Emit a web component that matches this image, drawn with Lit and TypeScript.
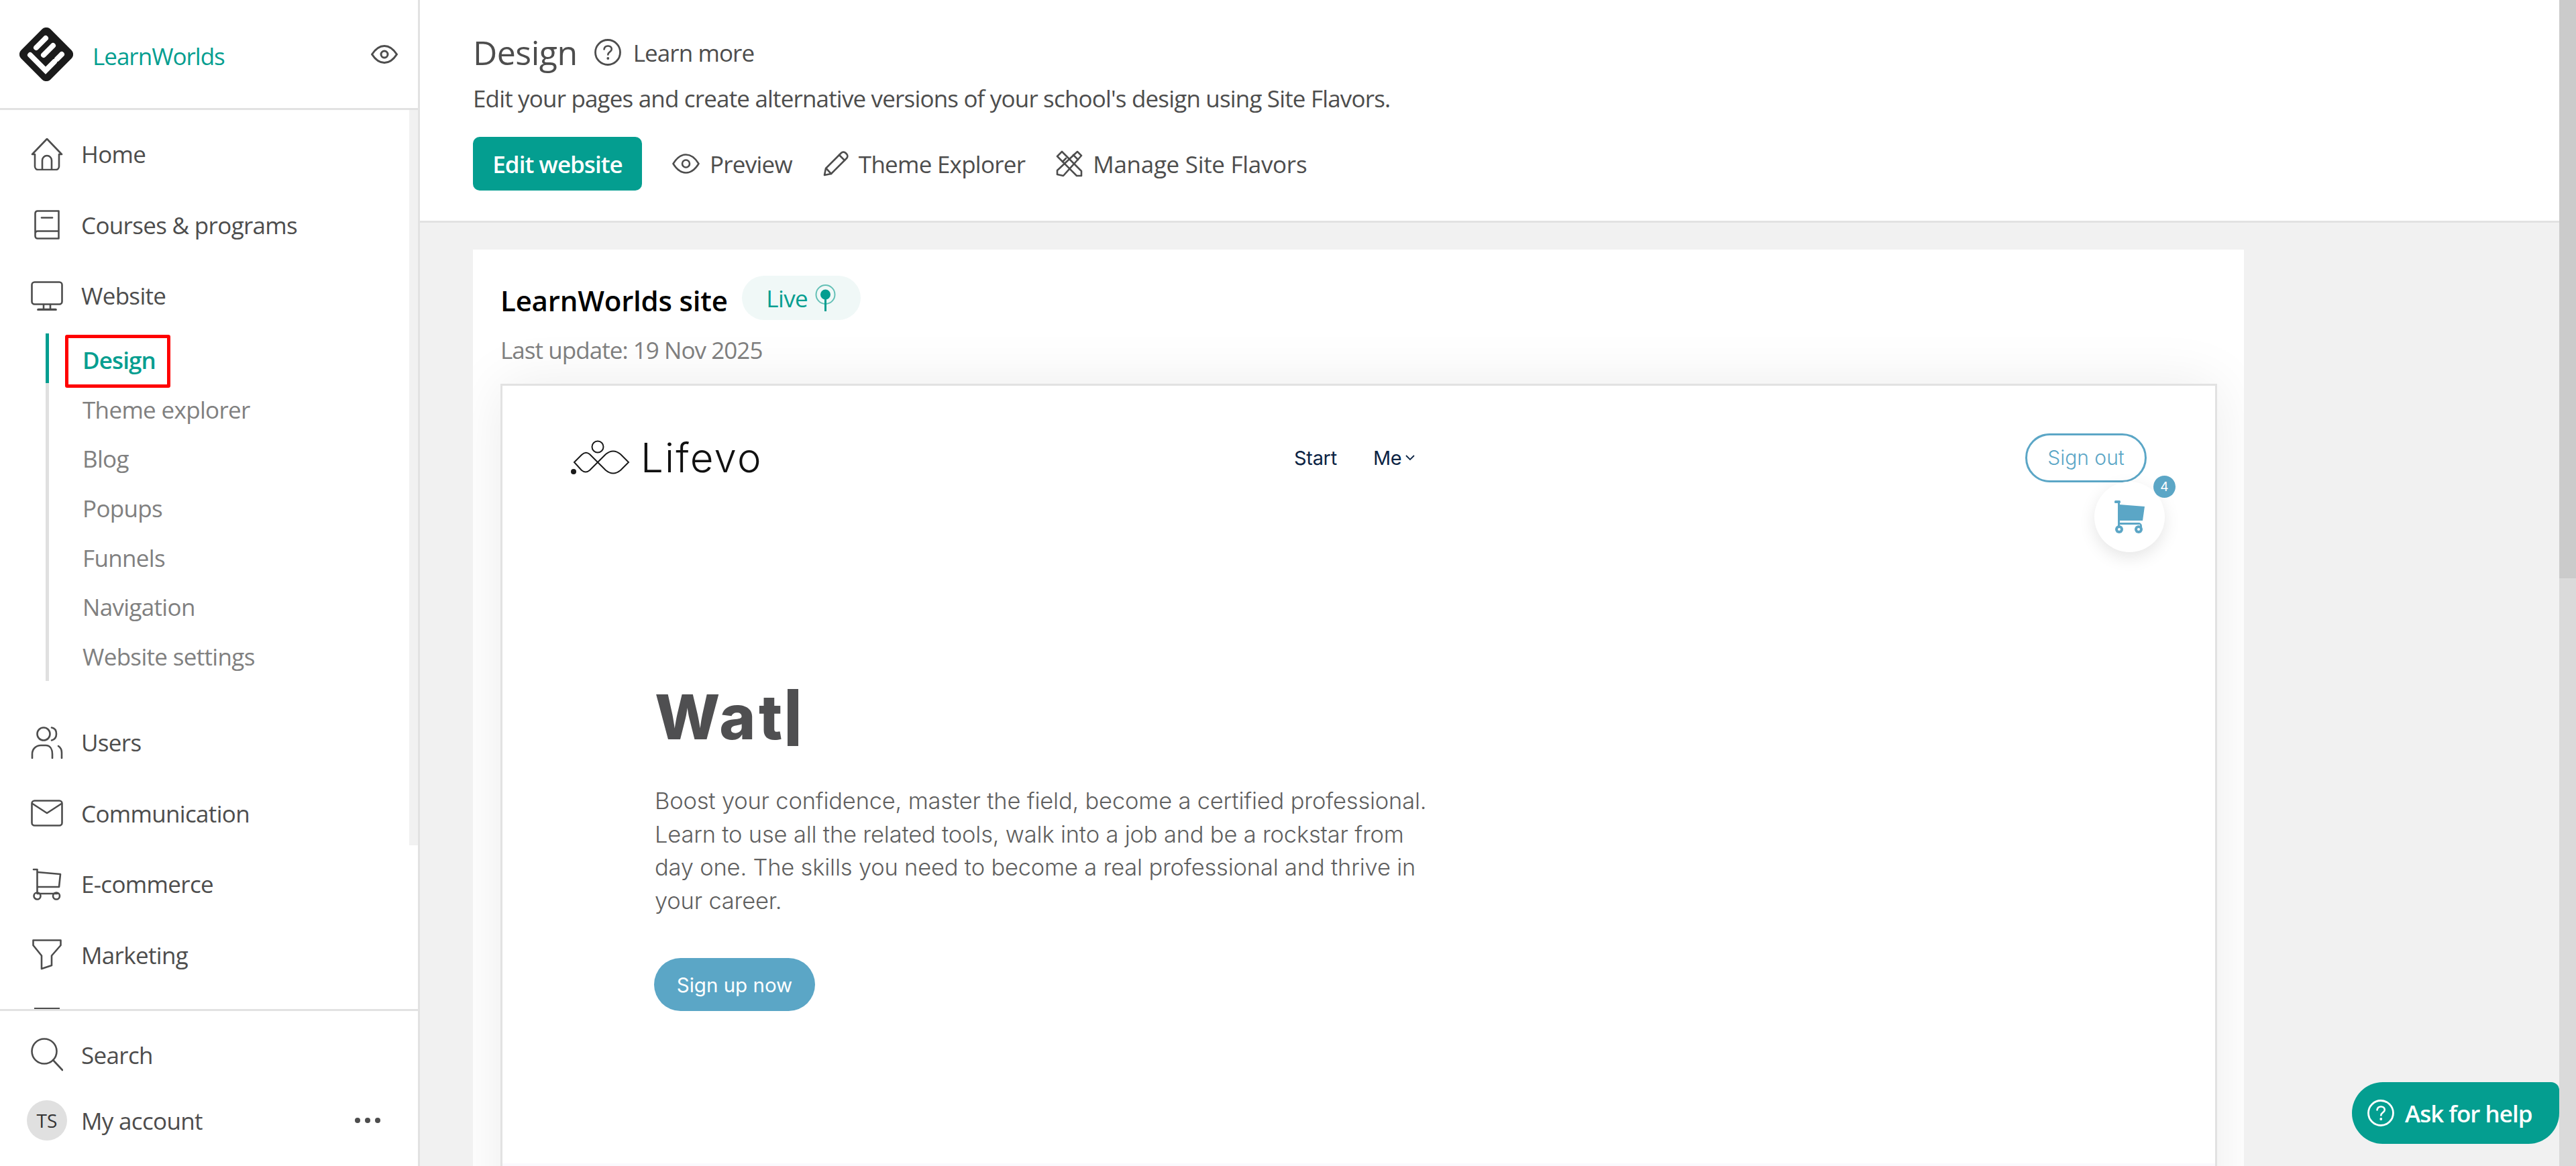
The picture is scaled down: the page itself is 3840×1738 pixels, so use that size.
import { LitElement, html, css, svg } from 'lit';
import { customElement } from 'lit/decorators.js';

const stroke = (w: number, h: number, body: unknown, sw = 2.6, color = '#4d4d4d') => html`<svg
  width=${w}
  height=${h}
  viewBox="0 0 ${w} ${h}"
  fill="none"
  stroke=${color}
  stroke-width=${sw}
  stroke-linecap="round"
  stroke-linejoin="round"
>${body}</svg>`;

const icons: Record<string, () => unknown> = {
  home: () => stroke(48, 48, svg`<path d="M2 24 24 1l22 23h-4v18a5 5 0 0 1-5 5H11a5 5 0 0 1-5-5V24H2Z"/><path d="M17 47V33a7 7 0 0 1 14 0v14"/>`),
  book: () => stroke(38, 44, svg`<path d="M1.5 35V5A3.5 3.5 0 0 1 5 1.5h31.500v41H5A3.500 3.500 0 0 1 1.500 39V35A3.500 3.500 0 0 1 5 31.500h31.500"/><path d="M11 11.500h16"/>`),
  monitor: () => stroke(48, 44, svg`<rect x="1.500" y="1.500" width="45" height="33" rx="4"/><path d="M19 35v7M29 35v7"/><path d="M11 42.500h26" stroke-width="3.600"/>`),
  users: () => stroke(48, 48, svg`<circle cx="19" cy="11" r="9.500"/><path d="M31 1.500c4.500.8 7 4.500 7 9.500s-3 8.500-7 9.500"/><path d="M2 47v-6c0-8 6-13 13-13h7c7 0 10 6 10 13v6"/><path d="M41 29c3 2 5 6 5 10v8"/>`),
  mail: () => stroke(48, 40, svg`<rect x="1.500" y="1.500" width="45" height="37" rx="4"/><path d="m2.500 6 21.500 14L45.500 6"/>`),
  cart: () => stroke(44, 48, svg`<path d="M2 2h5.500v36h30"/><path d="M8 6l34 3-2 19H8"/><circle cx="7.500" cy="41.500" r="5"/><circle cx="36" cy="41.500" r="5"/>`),
  funnel: () => stroke(44, 46, svg`<path d="M1.500 1.500h41v7.500L29 24.500V39l-15 5V24.500L1.500 9Z"/>`),
  search: () => stroke(48, 50, svg`<circle cx="20" cy="20" r="18.500"/><path d="m33 33 14 15"/>`),
  eye: () => stroke(40, 28, svg`<path d="M1.500 14C7 5.500 13 1.500 20 1.500S33 5.500 38.500 14C33 22.500 27 26.500 20 26.500S7 22.500 1.500 14Z" stroke-width="3"/><circle cx="20" cy="14" r="5" stroke-width="3"/>`),
  preview: () => stroke(41, 30, svg`<path d="M1.500 15C7 6 13 1.500 20.500 1.500S34 6 39.500 15C34 24 28 28.500 20.500 28.500S7 24 1.500 15Z"/><circle cx="20.500" cy="15" r="5.500"/>`),
  pencil: () => stroke(38, 38, svg`<path d="M2 36l2-10L27 3a4.500 4.500 0 0 1 6.500 0l1.500 1.500a4.500 4.500 0 0 1 0 6.500L12 34Z"/><path d="m4.500 26 7.500 8M24 6l8 8"/>`),
  tools: () => stroke(40, 40, svg`<path d="M2 9 9 2l29 29v7h-7Z"/><path d="m10 17 5-5M32 2l6 6-27 30-9-2v-6Z"/><path d="m26 7 7 7"/>`),
};

const help = (color: string, size: number) => html`<svg width=${size} height=${size} viewBox="0 0 40 40" fill="none">
  <circle cx="20" cy="20" r="18.500" stroke=${color} stroke-width="2.800" />
  <path d="M14.500 15.500c.5-3.500 3-5 5.800-5 3.200 0 5.500 2 5.500 4.800 0 4-5.500 4-5.500 8.200" stroke=${color} stroke-width="2.600" stroke-linecap="round" />
  <circle cx="20.300" cy="29" r="1.900" fill=${color} />
</svg>`;

const brandLogo = html`<svg width="80" height="80" viewBox="0 0 80 80">
  <rect x="9" y="9" width="62" height="62" rx="9" transform="rotate(45 40 40)" fill="#1b1b1b" />
  <g stroke="#fff" stroke-width="8" stroke-linecap="round" stroke-linejoin="miter" fill="none">
    <path d="M16 41 39 64l13-13" />
    <path d="M25 30 39 16" />
    <path d="M36 41 50 27" />
    <path d="M56 47 63 40" />
  </g>
</svg>`;

const lifevoLogo = html`<svg width="90" height="52" viewBox="0 0 90 52" fill="none" stroke="#1a1a1a" stroke-width="2">
  <circle cx="41" cy="10" r="8.500" />
  <path d="M6 33 17 22Q23 16 29 21L53 45Q64 54 75 45L87 33 75 21Q64 12 53 21L29 45Q23 50 17 45Z" />
  <circle cx="5" cy="47" r="4" fill="#1a1a1a" stroke="none" />
</svg>`;

@customElement('side-nav')
export class SideNav extends LitElement {
  static styles = css`
    :host {
      display: flex;
      flex-direction: column;
      width: 626px;
      height: 1738px;
      flex: none;
      box-sizing: border-box;
      background: #fff;
      border-right: 3px solid #e2e2e2;
      font-family: 'Open Sans', 'Noto Sans', sans-serif;
      color: #4d4d4d;
    }
    .brand {
      height: 164px;
      flex: none;
      box-sizing: border-box;
      border-bottom: 3px solid #e2e2e2;
      display: flex;
      align-items: center;
      padding: 0 30px 0 29px;
    }
    .brand-name {
      margin-left: 29px;
      font-size: 35px;
      letter-spacing: -1px;
      color: #049e90;
      flex: 1;
      padding-top: 6px;
    }
    .scroll {
      flex: 1;
      min-height: 0;
      overflow: hidden;
      display: flex;
    }
    .list {
      flex: 1;
      min-width: 0;
      padding-top: 13px;
    }
    .thumb {
      width: 13px;
      height: 1096px;
      background: #f1f1f1;
      flex: none;
    }
    .row {
      height: 105.5px;
      display: flex;
      align-items: center;
      font-size: 35px;
      letter-spacing: -0.67px;
    }
    .row .ic {
      width: 48px;
      margin: 0 27px 0 46px;
      display: flex;
      justify-content: center;
      flex: none;
    }
    .row .ic svg {
      display: block;
    }
    .sub {
      margin: 3.5px 0 39px 68px;
      border-left: 5px solid #e0e0e0;
      position: relative;
      height: 518px;
      box-sizing: border-box;
      padding-left: 50px;
      padding-top: 3px;
    }
    .sub a {
      display: block;
      height: 73.7px;
      line-height: 73.7px;
      font-size: 35px;
      letter-spacing: -0.67px;
      color: #808080;
      white-space: nowrap;
    }
    .sub a.on {
      color: #049e90;
      font-weight: 600;
      letter-spacing: -0.9px;
    }
    .sub .mark {
      position: absolute;
      left: -5px;
      top: 0;
      width: 5px;
      height: 74px;
      background: #049e90;
    }
    .sub .outline {
      position: absolute;
      left: 24px;
      top: 2px;
      width: 157px;
      height: 79px;
      box-sizing: border-box;
      border: 5px solid #f00;
      border-radius: 3px;
    }
    .clipped {
      width: 38px;
      height: 2px;
      margin: 26px 0 0 51px;
      background: #4d4d4d;
    }
    .foot {
      flex: none;
      height: 234px;
      box-sizing: border-box;
      border-top: 3px solid #e2e2e2;
      padding-top: 15px;
    }
    .foot .row {
      height: 100px;
    }
    .foot .row.account {
      height: 96px;
    }
    .avatar {
      width: 60px;
      height: 60px;
      border-radius: 50%;
      background: #e0e0e0;
      margin: 0 21px 0 40px;
      display: flex;
      align-items: center;
      justify-content: center;
      font-size: 28px;
      font-weight: 500;
      letter-spacing: 0;
      color: #333;
      flex: none;
    }
    .dots {
      margin-left: auto;
      margin-right: 56px;
      display: flex;
      gap: 7px;
    }
    .dots i {
      width: 8px;
      height: 8px;
      border-radius: 50%;
      background: #4d4d4d;
    }
  `;

  private row(icon: string, label: string) {
    return html`<div class="row"><span class="ic">${icons[icon]()}</span>${label}</div>`;
  }

  render() {
    const subs = ['Design', 'Theme explorer', 'Blog', 'Popups', 'Funnels', 'Navigation', 'Website settings'];
    return html`
      <div class="brand">
        ${brandLogo}
        <span class="brand-name">LearnWorlds</span>
        ${icons.eye()}
      </div>
      <div class="scroll">
        <div class="list">
          ${this.row('home', 'Home')} ${this.row('book', 'Courses & programs')} ${this.row('monitor', 'Website')}
          <div class="sub">
            <span class="mark"></span>
            <span class="outline"></span>
            ${subs.map((s, i) => html`<a class=${i === 0 ? 'on' : ''}>${s}</a>`)}
          </div>
          ${this.row('users', 'Users')} ${this.row('mail', 'Communication')} ${this.row('cart', 'E-commerce')}
          ${this.row('funnel', 'Marketing')}
          <div class="clipped"></div>
        </div>
        <div class="thumb"></div>
      </div>
      <div class="foot">
        ${this.row('search', 'Search')}
        <div class="row account">
          <span class="avatar">TS</span>My account
          <span class="dots"><i></i><i></i><i></i></span>
        </div>
      </div>
    `;
  }
}

@customElement('site-preview')
export class SitePreview extends LitElement {
  static styles = css`
    :host {
      display: block;
      box-sizing: border-box;
      height: 1300px;
      border: 3px solid #e2e2e2;
      background: #fff;
      box-shadow: 0 0 80px rgba(0, 0, 0, 0.08);
      font-family: Inter, 'Noto Sans', sans-serif;
      position: relative;
    }
    .first {
      height: 1159px;
      overflow: hidden;
    }
    .next {
      height: 138px;
      background: #faf9fd;
    }
    .top {
      display: grid;
      grid-template-columns: 1079px 1fr auto;
      align-items: center;
      height: 74px;
      margin-top: 70px;
      padding: 0 102px 0 101px;
    }
    .logo {
      display: flex;
      align-items: center;
      gap: 15px;
    }
    .logo span {
      font-weight: 300;
      font-size: 60px;
      line-height: 52px;
      color: #111;
      letter-spacing: 2.2px;
    }
    .links {
      display: flex;
      gap: 54px;
      font-size: 29px;
      letter-spacing: -0.3px;
      color: #0c2444;
      align-items: center;
    }
    .me {
      display: flex;
      align-items: center;
      gap: 6px;
    }
    .signout {
      width: 181px;
      height: 73px;
      box-sizing: border-box;
      border: 3px solid #5ba6c6;
      border-radius: 37px;
      color: #5ba6c6;
      font-size: 30px;
      font-weight: 300;
      display: flex;
      align-items: center;
      justify-content: center;
    }
    .cart {
      position: absolute;
      left: 2373px;
      top: 143px;
      width: 105px;
      height: 105px;
      border-radius: 50%;
      background: #fff;
      box-shadow: 0 8px 24px rgba(0, 0, 0, 0.1);
      display: flex;
      align-items: center;
      justify-content: center;
    }
    .badge {
      position: absolute;
      left: 88px;
      top: -9px;
      width: 33px;
      height: 33px;
      border-radius: 50%;
      background: #5ba6c6;
      color: #fff;
      font-size: 19px;
      display: flex;
      align-items: center;
      justify-content: center;
    }
    .hero {
      margin: 0 0 0 227px;
      padding-top: 295px;
    }
    h1 {
      margin: 0;
      font-size: 92px;
      line-height: 110px;
      font-weight: 800;
      color: #4f4f51;
      letter-spacing: 4.5px;
      display: flex;
      align-items: center;
    }
    .caret {
      width: 16px;
      height: 85px;
      background: #4f4f51;
      margin: 0 0 0 3px;
    }
    p {
      margin: 45px 0 0;
      font-size: 34.5px;
      line-height: 49.6px;
      font-weight: 300;
      color: #5f5f5f;
      letter-spacing: -0.2px;
      white-space: nowrap;
    }
    .cta {
      margin-top: 61px;
      margin-left: -1px;
      width: 240px;
      height: 79px;
      border-radius: 40px;
      background: #5ba6c6;
      color: #fff;
      font-size: 29.5px;
      display: flex;
      align-items: center;
      justify-content: center;
    }
  `;

  render() {
    return html`
      <div class="first">
        <div class="top">
          <div class="logo">${lifevoLogo}<span>Lifevo</span></div>
          <div class="links">
            <span>Start</span>
            <span class="me"
              >Me<svg width="14" height="9" viewBox="0 0 14 9" fill="none" stroke="#0c2444" stroke-width="1.8"
                ><path d="m1 1 6 6 6-6" /></svg
            ></span>
          </div>
          <div class="signout">Sign out</div>
        </div>
        <div class="hero">
          <h1>Wat<span class="caret"></span></h1>
          <p>
            Boost your confidence, master the field, become a certified professional.<br />
            Learn to use all the related tools, walk into a job and be a rockstar from<br />
            day one. The skills you need to become a real professional and thrive in<br />
            your career.
          </p>
          <div class="cta">Sign up now</div>
        </div>
      </div>
      <div class="next"></div>
      <div class="cart">
        <svg width="46" height="49" viewBox="0 0 46 49" fill="#5ba6c6">
          <rect x="0" y="0" width="9" height="4" rx="1.5" />
          <rect x="5" y="1" width="3" height="40" />
          <path d="M7 6 45 9 42 30H7Z" />
          <path d="M5 33H36a5 5 0 0 1 5 5v2H38V36H8v4H5Z" />
          <circle cx="7" cy="43" r="6" />
          <circle cx="36" cy="43" r="6" />
          <circle cx="7" cy="43" r="2" fill="#fff" />
          <circle cx="36" cy="43" r="2" fill="#fff" />
        </svg>
        <span class="badge">4</span>
      </div>
    `;
  }
}

@customElement('app-root')
export class AppRoot extends LitElement {
  static styles = css`
    :host {
      display: flex;
      width: 3840px;
      height: 1738px;
      overflow: hidden;
      position: relative;
      background: #f1f1f1;
      font-family: 'Open Sans', 'Noto Sans', sans-serif;
      color: #4d4d4d;
    }
    main {
      flex: 1;
      min-width: 0;
      height: 1738px;
      overflow: hidden;
      display: flex;
      flex-direction: column;
    }
    header {
      height: 332px;
      flex: none;
      box-sizing: border-box;
      background: #fff;
      border-bottom: 3px solid #e2e2e2;
      padding: 48px 0 0 79px;
    }
    .title {
      display: flex;
      align-items: center;
      height: 60px;
    }
    .title h2 {
      margin: 0 25px 0 0;
      font-size: 50px;
      font-weight: 400;
      letter-spacing: -0.5px;
    }
    .learn {
      margin-left: 18px;
      font-size: 35px;
      letter-spacing: -0.9px;
    }
    .desc {
      margin-top: 14px;
      font-size: 35px;
      line-height: 50px;
      letter-spacing: -0.83px;
    }
    .actions {
      margin-top: 32px;
      display: flex;
      align-items: center;
      font-size: 35px;
      letter-spacing: -0.75px;
    }
    .primary {
      width: 252px;
      height: 80px;
      border-radius: 10px;
      background: #049e90;
      color: #fff;
      font-weight: 600;
      letter-spacing: -1px;
      display: flex;
      align-items: center;
      justify-content: center;
      margin-right: 45px;
    }
    .act {
      display: flex;
      align-items: center;
      gap: 15px;
      margin-right: 46px;
    }
    .act.wide {
      letter-spacing: -0.3px;
    }
    .card {
      margin: 40px 0 0 79px;
      width: 2640px;
      height: 1400px;
      flex: none;
      box-sizing: border-box;
      background: #fff;
      padding: 39px 40px 0 41px;
      overflow: hidden;
    }
    .card-head {
      display: flex;
      align-items: center;
      height: 66px;
    }
    .card-head h3 {
      margin: 0 21px 0 0;
      padding-top: 6px;
      font-size: 42px;
      font-weight: 600;
      color: #000;
      letter-spacing: -0.2px;
    }
    .live {
      width: 177px;
      height: 66px;
      border-radius: 33px;
      background: #f0f8f7;
      color: #049e90;
      font-size: 35px;
      letter-spacing: -0.6px;
      display: flex;
      align-items: center;
      justify-content: center;
      gap: 11px;
    }
    .updated {
      margin: 22px 0 27px;
      font-size: 35px;
      line-height: 46px;
      letter-spacing: -0.95px;
      color: #808080;
    }
    .scrollbar {
      width: 25px;
      height: 1738px;
      flex: none;
      background: #dadada;
    }
    .scrollbar div {
      height: 862px;
      background: #cbcbcb;
    }
    .ask {
      position: absolute;
      right: 25px;
      top: 1613px;
      width: 309px;
      height: 92px;
      box-sizing: border-box;
      padding-left: 23px;
      border-radius: 46px 12px 46px 46px;
      background: #049e90;
      color: #fff;
      font-size: 35px;
      font-weight: 600;
      letter-spacing: -1px;
      display: flex;
      align-items: center;
      gap: 16px;
    }
  `;

  render() {
    return html`
      <side-nav></side-nav>
      <main>
        <header>
          <div class="title">
            <h2>Design</h2>
            ${help('#4d4d4d', 40)}
            <span class="learn">Learn more</span>
          </div>
          <div class="desc">Edit your pages and create alternative versions of your school's design using Site Flavors.</div>
          <div class="actions">
            <div class="primary">Edit website</div>
            <div class="act">${icons.preview()}Preview</div>
            <div class="act">${icons.pencil()}Theme Explorer</div>
            <div class="act wide">${icons.tools()}Manage Site Flavors</div>
          </div>
        </header>
        <section class="card">
          <div class="card-head">
            <h3>LearnWorlds site</h3>
            <span class="live"
              >Live<svg width="31" height="40" viewBox="0 0 31 40" fill="none">
                <ellipse cx="15.5" cy="15" rx="14" ry="14" stroke="#64c0b6" stroke-width="2" />
                <circle cx="15.5" cy="15" r="7.5" fill="#049e90" />
                <path d="M15.5 15v25" stroke="#049e90" stroke-width="3" />
              </svg></span>
          </div>
          <div class="updated">Last update: 19 Nov 2025</div>
          <site-preview></site-preview>
        </section>
      </main>
      <div class="scrollbar"><div></div></div>
      <div class="ask">${help('#fff', 40)}Ask for help</div>
    `;
  }
}
